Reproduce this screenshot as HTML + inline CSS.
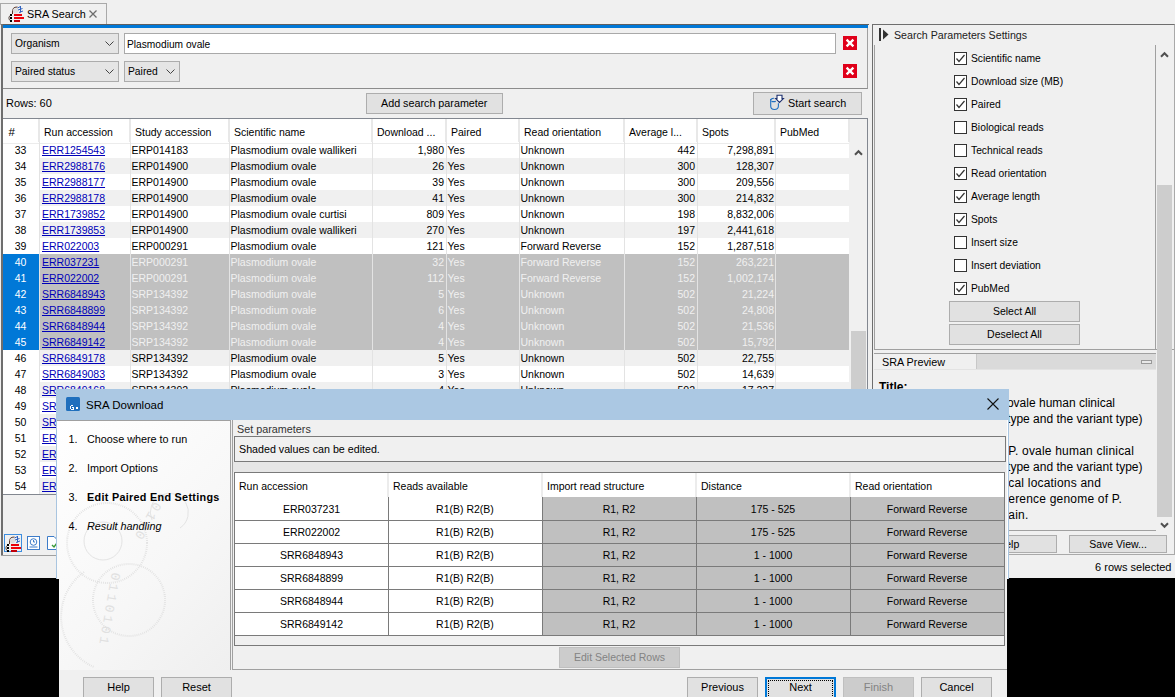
<!DOCTYPE html>
<html><head><meta charset="utf-8"><style>
*{margin:0;padding:0;box-sizing:border-box}
html,body{width:1175px;height:697px;overflow:hidden;background:#f0f0f0;font-family:"Liberation Sans", sans-serif;font-size:10.5px;color:#000;position:relative}
.a{position:absolute}
.t{position:absolute;white-space:pre;line-height:12px}
.btn{position:absolute;background:#e1e1e1;border:1px solid #adadad}
.cb{position:absolute;width:13px;height:13px;border:1px solid #333;background:#fff}
.lnk{color:#0000b8;text-decoration:underline}
</style></head><body>
<div class="a" style="left:0;top:3px;width:107px;height:22px;border:1px solid #a9a9a9;border-bottom:none;background:#f0f0f0"></div>
<svg class="a" style="left:0;top:0" width="26" height="24" viewBox="0 0 26 24"><path d="M12.5 14 Q12 10 13.5 8.2 Q14.5 7 17.5 7" stroke="#5b3b30" stroke-width="1" fill="none"/>
<circle cx="15.5" cy="10.8" r="2.6" fill="#dedede"/>
<path d="M17.5 8 L20.5 6.5 M18 10 L22.5 8.5 M19 12.5 L23 11 M20.5 6 L20.5 12.5" stroke="#2f62c0" stroke-width="1" fill="none"/>
<path d="M11 15 Q8 16.5 9 19 Q9.5 20.5 11 21" stroke="#4a3a34" stroke-width="0.9" fill="none"/>
<g shape-rendering="crispEdges"><rect x="10" y="14" width="2" height="2" fill="#000"/><rect x="10" y="17" width="2" height="2" fill="#000"/><rect x="10" y="20" width="2" height="2" fill="#000"/>
<rect x="14" y="14" width="8" height="2" fill="#e8000a"/><rect x="14" y="17" width="10" height="2" fill="#f0000a"/><rect x="14" y="20" width="6" height="2" fill="#c0000a"/></g></svg>
<div class="t" style="left:27px;top:8px;font-size:10.8px">SRA Search</div>
<svg class="a" style="left:89px;top:10px" width="8" height="8" viewBox="0 0 8 8"><path d="M0.5 0.5L7.5 7.5M7.5 0.5L0.5 7.5" stroke="#6d6d6d" stroke-width="1.3"/></svg>
<div class="a" style="left:1px;top:24px;width:868px;height:1px;background:#5f5f5f"></div>
<div class="a" style="left:2px;top:25px;width:866px;height:3px;background:#0078d7"></div>
<div class="a" style="left:3px;top:28px;width:865px;height:61px;border-right:1px solid #a0a0a0;border-bottom:1px solid #8c8c8c"></div>
<div class="a" style="left:11px;top:33px;width:108px;height:21px;background:#e5e5e5;border:1px solid #acacac"></div>
<div class="t" style="left:15px;top:38px;font-size:10.3px">Organism</div>
<svg class="a" style="left:105px;top:41px" width="9" height="5" viewBox="0 0 9 5"><path d="M0.5 0.5L4.5 4.5L8.5 0.5" stroke="#444" stroke-width="1" fill="none"/></svg>
<div class="a" style="left:11px;top:61px;width:108px;height:21px;background:#e5e5e5;border:1px solid #acacac"></div>
<div class="t" style="left:15px;top:66px;font-size:10.3px">Paired status</div>
<svg class="a" style="left:105px;top:69px" width="9" height="5" viewBox="0 0 9 5"><path d="M0.5 0.5L4.5 4.5L8.5 0.5" stroke="#444" stroke-width="1" fill="none"/></svg>
<div class="a" style="left:124px;top:61px;width:56px;height:21px;background:#e5e5e5;border:1px solid #acacac"></div>
<div class="t" style="left:128px;top:66px;font-size:10.3px">Paired</div>
<svg class="a" style="left:166px;top:69px" width="9" height="5" viewBox="0 0 9 5"><path d="M0.5 0.5L4.5 4.5L8.5 0.5" stroke="#444" stroke-width="1" fill="none"/></svg>
<div class="a" style="left:124px;top:33px;width:712px;height:21px;background:#fff;border:1px solid #a9a9a9"></div>
<div class="t" style="left:127px;top:38.5px;font-size:10.2px">Plasmodium ovale</div>
<div class="a" style="left:843px;top:36px;width:14px;height:14px;background:#e0001a"></div>
<svg class="a" style="left:843px;top:36px" width="14" height="14" viewBox="0 0 14 14"><path d="M3.6 3.6L10.4 10.4M10.4 3.6L3.6 10.4" stroke="#fff" stroke-width="2.3"/></svg>
<div class="a" style="left:843px;top:64px;width:14px;height:14px;background:#e0001a"></div>
<svg class="a" style="left:843px;top:64px" width="14" height="14" viewBox="0 0 14 14"><path d="M3.6 3.6L10.4 10.4M10.4 3.6L3.6 10.4" stroke="#fff" stroke-width="2.3"/></svg>
<div class="t" style="left:6px;top:97px;font-size:11px">Rows: 60</div>
<div class="btn" style="left:366px;top:93px;width:137px;height:21px"></div>
<div class="t" style="left:381px;top:97px;font-size:10.75px">Add search parameter</div>
<div class="btn" style="left:753px;top:92px;width:109px;height:23px"></div>
<svg class="a" style="left:765px;top:92px" width="25" height="22" viewBox="0 0 25 22">
<path d="M5.7 7 L5.7 14 Q5.7 17.5 9.5 17.5 Q13.4 17.5 13.4 14 L13.4 11.2" stroke="#1f6fc0" stroke-width="1.1" fill="none"/>
<path d="M5.7 8.2 Q5.7 6.4 8.9 6.3" stroke="#1f6fc0" stroke-width="1.1" fill="none"/>
<path d="M6.5 9.4 Q8.5 9.9 10.8 9.4" stroke="#1f6fc0" stroke-width="1.1" fill="none"/>
<path d="M12 3.2 L17 3.2 L17 6.6 L18.4 6.6 L14.5 10.4 L10.7 6.6 L12 6.6 Z" stroke="#1c2f6e" stroke-width="1.1" fill="#fff"/>
</svg>
<div class="t" style="left:788px;top:97px;font-size:10.8px">Start search</div>
<div class="a" style="left:2px;top:118px;width:866px;height:377px;border:1px solid #828790;border-left:none;background:#fff;overflow:hidden">
<div class="a" style="left:0;top:0;width:847px;height:24px;background:#fff"></div>
<div class="a" style="left:847px;top:0;width:20px;height:24px;background:#f0f0f0"></div>
<div class="a" style="left:36px;top:0;width:2px;height:24px;background:#e8e8e8"></div>
<div class="t" style="left:6.5px;top:7px;font-size:11.5px">#</div>
<div class="a" style="left:127px;top:0;width:2px;height:24px;background:#e8e8e8"></div>
<div class="t" style="left:42px;top:7px;font-size:10.5px">Run accession</div>
<div class="a" style="left:226px;top:0;width:2px;height:24px;background:#e8e8e8"></div>
<div class="t" style="left:133px;top:7px;font-size:10.5px">Study accession</div>
<div class="a" style="left:369px;top:0;width:2px;height:24px;background:#e8e8e8"></div>
<div class="t" style="left:232px;top:7px;font-size:10.5px">Scientific name</div>
<div class="a" style="left:443px;top:0;width:2px;height:24px;background:#e8e8e8"></div>
<div class="t" style="left:375px;top:7px;font-size:10.5px">Download ...</div>
<div class="a" style="left:516px;top:0;width:2px;height:24px;background:#e8e8e8"></div>
<div class="t" style="left:449px;top:7px;font-size:10.5px">Paired</div>
<div class="a" style="left:621px;top:0;width:2px;height:24px;background:#e8e8e8"></div>
<div class="t" style="left:522px;top:7px;font-size:10.5px">Read orientation</div>
<div class="a" style="left:694px;top:0;width:2px;height:24px;background:#e8e8e8"></div>
<div class="t" style="left:627px;top:7px;font-size:10.5px">Average l...</div>
<div class="a" style="left:772px;top:0;width:2px;height:24px;background:#e8e8e8"></div>
<div class="t" style="left:700px;top:7px;font-size:10.5px">Spots</div>
<div class="a" style="left:846px;top:0;width:2px;height:24px;background:#e8e8e8"></div>
<div class="t" style="left:778px;top:7px;font-size:10.5px">PubMed</div>
<div class="a" style="left:37px;top:23px;width:810px;height:16px;background:#fff"></div>
<div class="a" style="left:0;top:23px;width:37px;height:16px;background:#fff"></div>
<div class="t" style="left:0;top:25px;width:37px;text-align:center;color:#000">33</div>
<div class="t lnk" style="left:40px;top:25px">ERR1254543</div>
<div class="t" style="left:129.5px;top:25px;color:#000">ERP014183</div>
<div class="t" style="left:228.5px;top:25px;color:#000">Plasmodium ovale wallikeri</div>
<div class="t" style="left:370px;top:25px;width:72px;text-align:right;color:#000">1,980</div>
<div class="t" style="left:445.5px;top:25px;color:#000">Yes</div>
<div class="t" style="left:518.5px;top:25px;color:#000">Unknown</div>
<div class="t" style="left:622px;top:25px;width:71px;text-align:right;color:#000">442</div>
<div class="t" style="left:695px;top:25px;width:77px;text-align:right;color:#000">7,298,891</div>
<div class="a" style="left:37px;top:39px;width:810px;height:16px;background:#f0f0f0"></div>
<div class="a" style="left:0;top:39px;width:37px;height:16px;background:#fff"></div>
<div class="t" style="left:0;top:41px;width:37px;text-align:center;color:#000">34</div>
<div class="t lnk" style="left:40px;top:41px">ERR2988176</div>
<div class="t" style="left:129.5px;top:41px;color:#000">ERP014900</div>
<div class="t" style="left:228.5px;top:41px;color:#000">Plasmodium ovale</div>
<div class="t" style="left:370px;top:41px;width:72px;text-align:right;color:#000">26</div>
<div class="t" style="left:445.5px;top:41px;color:#000">Yes</div>
<div class="t" style="left:518.5px;top:41px;color:#000">Unknown</div>
<div class="t" style="left:622px;top:41px;width:71px;text-align:right;color:#000">300</div>
<div class="t" style="left:695px;top:41px;width:77px;text-align:right;color:#000">128,307</div>
<div class="a" style="left:37px;top:55px;width:810px;height:16px;background:#fff"></div>
<div class="a" style="left:0;top:55px;width:37px;height:16px;background:#fff"></div>
<div class="t" style="left:0;top:57px;width:37px;text-align:center;color:#000">35</div>
<div class="t lnk" style="left:40px;top:57px">ERR2988177</div>
<div class="t" style="left:129.5px;top:57px;color:#000">ERP014900</div>
<div class="t" style="left:228.5px;top:57px;color:#000">Plasmodium ovale</div>
<div class="t" style="left:370px;top:57px;width:72px;text-align:right;color:#000">39</div>
<div class="t" style="left:445.5px;top:57px;color:#000">Yes</div>
<div class="t" style="left:518.5px;top:57px;color:#000">Unknown</div>
<div class="t" style="left:622px;top:57px;width:71px;text-align:right;color:#000">300</div>
<div class="t" style="left:695px;top:57px;width:77px;text-align:right;color:#000">209,556</div>
<div class="a" style="left:37px;top:71px;width:810px;height:16px;background:#f0f0f0"></div>
<div class="a" style="left:0;top:71px;width:37px;height:16px;background:#fff"></div>
<div class="t" style="left:0;top:73px;width:37px;text-align:center;color:#000">36</div>
<div class="t lnk" style="left:40px;top:73px">ERR2988178</div>
<div class="t" style="left:129.5px;top:73px;color:#000">ERP014900</div>
<div class="t" style="left:228.5px;top:73px;color:#000">Plasmodium ovale</div>
<div class="t" style="left:370px;top:73px;width:72px;text-align:right;color:#000">41</div>
<div class="t" style="left:445.5px;top:73px;color:#000">Yes</div>
<div class="t" style="left:518.5px;top:73px;color:#000">Unknown</div>
<div class="t" style="left:622px;top:73px;width:71px;text-align:right;color:#000">300</div>
<div class="t" style="left:695px;top:73px;width:77px;text-align:right;color:#000">214,832</div>
<div class="a" style="left:37px;top:87px;width:810px;height:16px;background:#fff"></div>
<div class="a" style="left:0;top:87px;width:37px;height:16px;background:#fff"></div>
<div class="t" style="left:0;top:89px;width:37px;text-align:center;color:#000">37</div>
<div class="t lnk" style="left:40px;top:89px">ERR1739852</div>
<div class="t" style="left:129.5px;top:89px;color:#000">ERP014900</div>
<div class="t" style="left:228.5px;top:89px;color:#000">Plasmodium ovale curtisi</div>
<div class="t" style="left:370px;top:89px;width:72px;text-align:right;color:#000">809</div>
<div class="t" style="left:445.5px;top:89px;color:#000">Yes</div>
<div class="t" style="left:518.5px;top:89px;color:#000">Unknown</div>
<div class="t" style="left:622px;top:89px;width:71px;text-align:right;color:#000">198</div>
<div class="t" style="left:695px;top:89px;width:77px;text-align:right;color:#000">8,832,006</div>
<div class="a" style="left:37px;top:103px;width:810px;height:16px;background:#f0f0f0"></div>
<div class="a" style="left:0;top:103px;width:37px;height:16px;background:#fff"></div>
<div class="t" style="left:0;top:105px;width:37px;text-align:center;color:#000">38</div>
<div class="t lnk" style="left:40px;top:105px">ERR1739853</div>
<div class="t" style="left:129.5px;top:105px;color:#000">ERP014900</div>
<div class="t" style="left:228.5px;top:105px;color:#000">Plasmodium ovale wallikeri</div>
<div class="t" style="left:370px;top:105px;width:72px;text-align:right;color:#000">270</div>
<div class="t" style="left:445.5px;top:105px;color:#000">Yes</div>
<div class="t" style="left:518.5px;top:105px;color:#000">Unknown</div>
<div class="t" style="left:622px;top:105px;width:71px;text-align:right;color:#000">197</div>
<div class="t" style="left:695px;top:105px;width:77px;text-align:right;color:#000">2,441,618</div>
<div class="a" style="left:37px;top:119px;width:810px;height:16px;background:#fff"></div>
<div class="a" style="left:0;top:119px;width:37px;height:16px;background:#fff"></div>
<div class="t" style="left:0;top:121px;width:37px;text-align:center;color:#000">39</div>
<div class="t lnk" style="left:40px;top:121px">ERR022003</div>
<div class="t" style="left:129.5px;top:121px;color:#000">ERP000291</div>
<div class="t" style="left:228.5px;top:121px;color:#000">Plasmodium ovale</div>
<div class="t" style="left:370px;top:121px;width:72px;text-align:right;color:#000">121</div>
<div class="t" style="left:445.5px;top:121px;color:#000">Yes</div>
<div class="t" style="left:518.5px;top:121px;color:#000">Forward Reverse</div>
<div class="t" style="left:622px;top:121px;width:71px;text-align:right;color:#000">152</div>
<div class="t" style="left:695px;top:121px;width:77px;text-align:right;color:#000">1,287,518</div>
<div class="a" style="left:37px;top:135px;width:810px;height:16px;background:#c0c0c0"></div>
<div class="a" style="left:0;top:135px;width:37px;height:16px;background:#0078d7"></div>
<div class="t" style="left:0;top:137px;width:37px;text-align:center;color:#fff">40</div>
<div class="t lnk" style="left:40px;top:137px">ERR037231</div>
<div class="t" style="left:129.5px;top:137px;color:#f0f0f0">ERP000291</div>
<div class="t" style="left:228.5px;top:137px;color:#f0f0f0">Plasmodium ovale</div>
<div class="t" style="left:370px;top:137px;width:72px;text-align:right;color:#f0f0f0">32</div>
<div class="t" style="left:445.5px;top:137px;color:#f0f0f0">Yes</div>
<div class="t" style="left:518.5px;top:137px;color:#f0f0f0">Forward Reverse</div>
<div class="t" style="left:622px;top:137px;width:71px;text-align:right;color:#f0f0f0">152</div>
<div class="t" style="left:695px;top:137px;width:77px;text-align:right;color:#f0f0f0">263,221</div>
<div class="a" style="left:37px;top:151px;width:810px;height:16px;background:#c0c0c0"></div>
<div class="a" style="left:0;top:151px;width:37px;height:16px;background:#0078d7"></div>
<div class="t" style="left:0;top:153px;width:37px;text-align:center;color:#fff">41</div>
<div class="t lnk" style="left:40px;top:153px">ERR022002</div>
<div class="t" style="left:129.5px;top:153px;color:#f0f0f0">ERP000291</div>
<div class="t" style="left:228.5px;top:153px;color:#f0f0f0">Plasmodium ovale</div>
<div class="t" style="left:370px;top:153px;width:72px;text-align:right;color:#f0f0f0">112</div>
<div class="t" style="left:445.5px;top:153px;color:#f0f0f0">Yes</div>
<div class="t" style="left:518.5px;top:153px;color:#f0f0f0">Forward Reverse</div>
<div class="t" style="left:622px;top:153px;width:71px;text-align:right;color:#f0f0f0">152</div>
<div class="t" style="left:695px;top:153px;width:77px;text-align:right;color:#f0f0f0">1,002,174</div>
<div class="a" style="left:37px;top:167px;width:810px;height:16px;background:#c0c0c0"></div>
<div class="a" style="left:0;top:167px;width:37px;height:16px;background:#0078d7"></div>
<div class="t" style="left:0;top:169px;width:37px;text-align:center;color:#fff">42</div>
<div class="t lnk" style="left:40px;top:169px">SRR6848943</div>
<div class="t" style="left:129.5px;top:169px;color:#f0f0f0">SRP134392</div>
<div class="t" style="left:228.5px;top:169px;color:#f0f0f0">Plasmodium ovale</div>
<div class="t" style="left:370px;top:169px;width:72px;text-align:right;color:#f0f0f0">5</div>
<div class="t" style="left:445.5px;top:169px;color:#f0f0f0">Yes</div>
<div class="t" style="left:518.5px;top:169px;color:#f0f0f0">Unknown</div>
<div class="t" style="left:622px;top:169px;width:71px;text-align:right;color:#f0f0f0">502</div>
<div class="t" style="left:695px;top:169px;width:77px;text-align:right;color:#f0f0f0">21,224</div>
<div class="a" style="left:37px;top:183px;width:810px;height:16px;background:#c0c0c0"></div>
<div class="a" style="left:0;top:183px;width:37px;height:16px;background:#0078d7"></div>
<div class="t" style="left:0;top:185px;width:37px;text-align:center;color:#fff">43</div>
<div class="t lnk" style="left:40px;top:185px">SRR6848899</div>
<div class="t" style="left:129.5px;top:185px;color:#f0f0f0">SRP134392</div>
<div class="t" style="left:228.5px;top:185px;color:#f0f0f0">Plasmodium ovale</div>
<div class="t" style="left:370px;top:185px;width:72px;text-align:right;color:#f0f0f0">6</div>
<div class="t" style="left:445.5px;top:185px;color:#f0f0f0">Yes</div>
<div class="t" style="left:518.5px;top:185px;color:#f0f0f0">Unknown</div>
<div class="t" style="left:622px;top:185px;width:71px;text-align:right;color:#f0f0f0">502</div>
<div class="t" style="left:695px;top:185px;width:77px;text-align:right;color:#f0f0f0">24,808</div>
<div class="a" style="left:37px;top:199px;width:810px;height:16px;background:#c0c0c0"></div>
<div class="a" style="left:0;top:199px;width:37px;height:16px;background:#0078d7"></div>
<div class="t" style="left:0;top:201px;width:37px;text-align:center;color:#fff">44</div>
<div class="t lnk" style="left:40px;top:201px">SRR6848944</div>
<div class="t" style="left:129.5px;top:201px;color:#f0f0f0">SRP134392</div>
<div class="t" style="left:228.5px;top:201px;color:#f0f0f0">Plasmodium ovale</div>
<div class="t" style="left:370px;top:201px;width:72px;text-align:right;color:#f0f0f0">4</div>
<div class="t" style="left:445.5px;top:201px;color:#f0f0f0">Yes</div>
<div class="t" style="left:518.5px;top:201px;color:#f0f0f0">Unknown</div>
<div class="t" style="left:622px;top:201px;width:71px;text-align:right;color:#f0f0f0">502</div>
<div class="t" style="left:695px;top:201px;width:77px;text-align:right;color:#f0f0f0">21,536</div>
<div class="a" style="left:37px;top:215px;width:810px;height:16px;background:#c0c0c0"></div>
<div class="a" style="left:0;top:215px;width:37px;height:16px;background:#0078d7"></div>
<div class="t" style="left:0;top:217px;width:37px;text-align:center;color:#fff">45</div>
<div class="t lnk" style="left:40px;top:217px">SRR6849142</div>
<div class="t" style="left:129.5px;top:217px;color:#f0f0f0">SRP134392</div>
<div class="t" style="left:228.5px;top:217px;color:#f0f0f0">Plasmodium ovale</div>
<div class="t" style="left:370px;top:217px;width:72px;text-align:right;color:#f0f0f0">4</div>
<div class="t" style="left:445.5px;top:217px;color:#f0f0f0">Yes</div>
<div class="t" style="left:518.5px;top:217px;color:#f0f0f0">Unknown</div>
<div class="t" style="left:622px;top:217px;width:71px;text-align:right;color:#f0f0f0">502</div>
<div class="t" style="left:695px;top:217px;width:77px;text-align:right;color:#f0f0f0">15,792</div>
<div class="a" style="left:37px;top:231px;width:810px;height:16px;background:#f0f0f0"></div>
<div class="a" style="left:0;top:231px;width:37px;height:16px;background:#fff"></div>
<div class="t" style="left:0;top:233px;width:37px;text-align:center;color:#000">46</div>
<div class="t lnk" style="left:40px;top:233px">SRR6849178</div>
<div class="t" style="left:129.5px;top:233px;color:#000">SRP134392</div>
<div class="t" style="left:228.5px;top:233px;color:#000">Plasmodium ovale</div>
<div class="t" style="left:370px;top:233px;width:72px;text-align:right;color:#000">5</div>
<div class="t" style="left:445.5px;top:233px;color:#000">Yes</div>
<div class="t" style="left:518.5px;top:233px;color:#000">Unknown</div>
<div class="t" style="left:622px;top:233px;width:71px;text-align:right;color:#000">502</div>
<div class="t" style="left:695px;top:233px;width:77px;text-align:right;color:#000">22,755</div>
<div class="a" style="left:37px;top:247px;width:810px;height:16px;background:#fff"></div>
<div class="a" style="left:0;top:247px;width:37px;height:16px;background:#fff"></div>
<div class="t" style="left:0;top:249px;width:37px;text-align:center;color:#000">47</div>
<div class="t lnk" style="left:40px;top:249px">SRR6849083</div>
<div class="t" style="left:129.5px;top:249px;color:#000">SRP134392</div>
<div class="t" style="left:228.5px;top:249px;color:#000">Plasmodium ovale</div>
<div class="t" style="left:370px;top:249px;width:72px;text-align:right;color:#000">3</div>
<div class="t" style="left:445.5px;top:249px;color:#000">Yes</div>
<div class="t" style="left:518.5px;top:249px;color:#000">Unknown</div>
<div class="t" style="left:622px;top:249px;width:71px;text-align:right;color:#000">502</div>
<div class="t" style="left:695px;top:249px;width:77px;text-align:right;color:#000">14,639</div>
<div class="a" style="left:37px;top:263px;width:810px;height:16px;background:#f0f0f0"></div>
<div class="a" style="left:0;top:263px;width:37px;height:16px;background:#fff"></div>
<div class="t" style="left:0;top:265px;width:37px;text-align:center;color:#000">48</div>
<div class="t lnk" style="left:40px;top:265px">SRR6849168</div>
<div class="t" style="left:129.5px;top:265px;color:#000">SRP134392</div>
<div class="t" style="left:228.5px;top:265px;color:#000">Plasmodium ovale</div>
<div class="t" style="left:370px;top:265px;width:72px;text-align:right;color:#000">4</div>
<div class="t" style="left:445.5px;top:265px;color:#000">Yes</div>
<div class="t" style="left:518.5px;top:265px;color:#000">Unknown</div>
<div class="t" style="left:622px;top:265px;width:71px;text-align:right;color:#000">502</div>
<div class="t" style="left:695px;top:265px;width:77px;text-align:right;color:#000">17,227</div>
<div class="a" style="left:37px;top:279px;width:810px;height:16px;background:#fff"></div>
<div class="a" style="left:0;top:279px;width:37px;height:16px;background:#fff"></div>
<div class="t" style="left:0;top:281px;width:37px;text-align:center;color:#000">49</div>
<div class="t lnk" style="left:40px;top:281px">SRR6849163</div>
<div class="t" style="left:129.5px;top:281px;color:#000">SRP134392</div>
<div class="t" style="left:228.5px;top:281px;color:#000">Plasmodium ovale</div>
<div class="t" style="left:370px;top:281px;width:72px;text-align:right;color:#000">4</div>
<div class="t" style="left:445.5px;top:281px;color:#000">Yes</div>
<div class="t" style="left:518.5px;top:281px;color:#000">Unknown</div>
<div class="t" style="left:622px;top:281px;width:71px;text-align:right;color:#000">502</div>
<div class="t" style="left:695px;top:281px;width:77px;text-align:right;color:#000">16,310</div>
<div class="a" style="left:37px;top:295px;width:810px;height:16px;background:#f0f0f0"></div>
<div class="a" style="left:0;top:295px;width:37px;height:16px;background:#fff"></div>
<div class="t" style="left:0;top:297px;width:37px;text-align:center;color:#000">50</div>
<div class="t lnk" style="left:40px;top:297px">SRR6849067</div>
<div class="t" style="left:129.5px;top:297px;color:#000">SRP134392</div>
<div class="t" style="left:228.5px;top:297px;color:#000">Plasmodium ovale</div>
<div class="t" style="left:370px;top:297px;width:72px;text-align:right;color:#000">5</div>
<div class="t" style="left:445.5px;top:297px;color:#000">Yes</div>
<div class="t" style="left:518.5px;top:297px;color:#000">Unknown</div>
<div class="t" style="left:622px;top:297px;width:71px;text-align:right;color:#000">502</div>
<div class="t" style="left:695px;top:297px;width:77px;text-align:right;color:#000">20,118</div>
<div class="a" style="left:37px;top:311px;width:810px;height:16px;background:#fff"></div>
<div class="a" style="left:0;top:311px;width:37px;height:16px;background:#fff"></div>
<div class="t" style="left:0;top:313px;width:37px;text-align:center;color:#000">51</div>
<div class="t lnk" style="left:40px;top:313px">ERR1254544</div>
<div class="t" style="left:129.5px;top:313px;color:#000">ERP014183</div>
<div class="t" style="left:228.5px;top:313px;color:#000">Plasmodium ovale</div>
<div class="t" style="left:370px;top:313px;width:72px;text-align:right;color:#000">6</div>
<div class="t" style="left:445.5px;top:313px;color:#000">Yes</div>
<div class="t" style="left:518.5px;top:313px;color:#000">Unknown</div>
<div class="t" style="left:622px;top:313px;width:71px;text-align:right;color:#000">300</div>
<div class="t" style="left:695px;top:313px;width:77px;text-align:right;color:#000">26,001</div>
<div class="a" style="left:37px;top:327px;width:810px;height:16px;background:#f0f0f0"></div>
<div class="a" style="left:0;top:327px;width:37px;height:16px;background:#fff"></div>
<div class="t" style="left:0;top:329px;width:37px;text-align:center;color:#000">52</div>
<div class="t lnk" style="left:40px;top:329px">ERR1254545</div>
<div class="t" style="left:129.5px;top:329px;color:#000">ERP014183</div>
<div class="t" style="left:228.5px;top:329px;color:#000">Plasmodium ovale</div>
<div class="t" style="left:370px;top:329px;width:72px;text-align:right;color:#000">5</div>
<div class="t" style="left:445.5px;top:329px;color:#000">Yes</div>
<div class="t" style="left:518.5px;top:329px;color:#000">Unknown</div>
<div class="t" style="left:622px;top:329px;width:71px;text-align:right;color:#000">300</div>
<div class="t" style="left:695px;top:329px;width:77px;text-align:right;color:#000">23,412</div>
<div class="a" style="left:37px;top:343px;width:810px;height:16px;background:#fff"></div>
<div class="a" style="left:0;top:343px;width:37px;height:16px;background:#fff"></div>
<div class="t" style="left:0;top:345px;width:37px;text-align:center;color:#000">53</div>
<div class="t lnk" style="left:40px;top:345px">ERR1254546</div>
<div class="t" style="left:129.5px;top:345px;color:#000">ERP014183</div>
<div class="t" style="left:228.5px;top:345px;color:#000">Plasmodium ovale</div>
<div class="t" style="left:370px;top:345px;width:72px;text-align:right;color:#000">4</div>
<div class="t" style="left:445.5px;top:345px;color:#000">Yes</div>
<div class="t" style="left:518.5px;top:345px;color:#000">Unknown</div>
<div class="t" style="left:622px;top:345px;width:71px;text-align:right;color:#000">300</div>
<div class="t" style="left:695px;top:345px;width:77px;text-align:right;color:#000">19,877</div>
<div class="a" style="left:37px;top:359px;width:810px;height:16px;background:#f0f0f0"></div>
<div class="a" style="left:0;top:359px;width:37px;height:16px;background:#fff"></div>
<div class="t" style="left:0;top:361px;width:37px;text-align:center;color:#000">54</div>
<div class="t lnk" style="left:40px;top:361px">ERR1254547</div>
<div class="t" style="left:129.5px;top:361px;color:#000">ERP014183</div>
<div class="t" style="left:228.5px;top:361px;color:#000">Plasmodium ovale</div>
<div class="t" style="left:370px;top:361px;width:72px;text-align:right;color:#000">7</div>
<div class="t" style="left:445.5px;top:361px;color:#000">Yes</div>
<div class="t" style="left:518.5px;top:361px;color:#000">Unknown</div>
<div class="t" style="left:622px;top:361px;width:71px;text-align:right;color:#000">300</div>
<div class="t" style="left:695px;top:361px;width:77px;text-align:right;color:#000">30,544</div>
<div class="a" style="left:0;top:24px;width:847px;height:1px;background:#ececec"></div>
<div class="a" style="left:37px;top:23px;width:1px;height:360px;background:#e3e3e3"></div>
<div class="a" style="left:128px;top:23px;width:1px;height:360px;background:#e3e3e3"></div>
<div class="a" style="left:227px;top:23px;width:1px;height:360px;background:#e3e3e3"></div>
<div class="a" style="left:370px;top:23px;width:1px;height:360px;background:#e3e3e3"></div>
<div class="a" style="left:444px;top:23px;width:1px;height:360px;background:#e3e3e3"></div>
<div class="a" style="left:517px;top:23px;width:1px;height:360px;background:#e3e3e3"></div>
<div class="a" style="left:622px;top:23px;width:1px;height:360px;background:#e3e3e3"></div>
<div class="a" style="left:695px;top:23px;width:1px;height:360px;background:#e3e3e3"></div>
<div class="a" style="left:773px;top:23px;width:1px;height:360px;background:#e3e3e3"></div>
<div class="a" style="left:847px;top:23px;width:1px;height:360px;background:#e3e3e3"></div>
<div class="a" style="left:847px;top:23px;width:18px;height:360px;background:#f0f0f0"></div>
<svg class="a" style="left:852px;top:30px" width="9" height="7" viewBox="0 0 9 7"><path d="M1 5.8L4.5 2.2L8 5.8" stroke="#505050" stroke-width="2" fill="none"/></svg>
<div class="a" style="left:849px;top:212px;width:15px;height:60px;background:#cdcdcd"></div>
</div>
<div class="a" style="left:1px;top:24px;width:2px;height:531px;background:#6e6e6e"></div>
<div class="a" style="left:4px;top:534px;width:18px;height:18px;border:1px solid #3d8ee0;background:#f0f0f0"></div>
<svg class="a" style="left:-3px;top:530px" width="26" height="24" viewBox="0 0 26 24"><path d="M12.5 14 Q12 10 13.5 8.2 Q14.5 7 17.5 7" stroke="#5b3b30" stroke-width="1" fill="none"/>
<circle cx="15.5" cy="10.8" r="2.6" fill="#dedede"/>
<path d="M17.5 8 L20.5 6.5 M18 10 L22.5 8.5 M19 12.5 L23 11 M20.5 6 L20.5 12.5" stroke="#2f62c0" stroke-width="1" fill="none"/>
<path d="M11 15 Q8 16.5 9 19 Q9.5 20.5 11 21" stroke="#4a3a34" stroke-width="0.9" fill="none"/>
<g shape-rendering="crispEdges"><rect x="10" y="14" width="2" height="2" fill="#000"/><rect x="10" y="17" width="2" height="2" fill="#000"/><rect x="10" y="20" width="2" height="2" fill="#000"/>
<rect x="14" y="14" width="8" height="2" fill="#e8000a"/><rect x="14" y="17" width="10" height="2" fill="#f0000a"/><rect x="14" y="20" width="6" height="2" fill="#c0000a"/></g></svg>
<svg class="a" style="left:27px;top:536px" width="13" height="14" viewBox="0 0 13 14">
<rect x="0.5" y="0.5" width="12" height="13" fill="#fff" stroke="#3d7cc9"/>
<circle cx="6.5" cy="6" r="3.3" fill="none" stroke="#3d7cc9"/><path d="M6.5 4 L6.5 6 L8 6" stroke="#3d7cc9" fill="none"/>
<path d="M2.5 11 L10.5 11" stroke="#3d7cc9"/>
</svg>
<svg class="a" style="left:47px;top:536px" width="12" height="14" viewBox="0 0 12 14">
<path d="M0.5 0.5 L7 0.5 L10 3.5 L10 13.5 L0.5 13.5 Z" fill="#fff" stroke="#3d7cc9"/>
<path d="M5 9 L7 11 L10 7" stroke="#3a9a3a" stroke-width="1.4" fill="none"/>
</svg>
<div class="a" style="left:1px;top:555px;width:868px;height:1px;background:#a0a0a0"></div>
<div class="a" style="left:872px;top:24px;width:303px;height:531px;border:1px solid #a9a9a9;border-left:1px solid #6e6e6e;border-top:1px solid #6e6e6e"></div>
<div class="a" style="left:879px;top:28px;width:2px;height:13px;background:#333"></div>
<svg class="a" style="left:883px;top:29px" width="6" height="11" viewBox="0 0 6 11"><path d="M0 0.5L5.5 5.5L0 10.5Z" fill="#333"/></svg>
<div class="t" style="left:894px;top:29px;font-size:10.65px;color:#222">Search Parameters Settings</div>
<div class="a" style="left:874px;top:45px;width:1px;height:304px;background:#a0a0a0"></div>
<div class="a" style="left:1155px;top:45px;width:1px;height:304px;background:#a0a0a0"></div>
<div class="a" style="left:874px;top:349px;width:300px;height:1px;background:#a0a0a0"></div>
<svg class="a" style="left:1160px;top:51px" width="9" height="7" viewBox="0 0 9 7"><path d="M1 5.8L4.5 2.2L8 5.8" stroke="#505050" stroke-width="2" fill="none"/></svg>
<div class="a" style="left:1157px;top:185px;width:15px;height:332px;background:#cdcdcd"></div>
<svg class="a" style="left:1160px;top:522px" width="9" height="7" viewBox="0 0 9 7"><path d="M1 1.2L4.5 4.8L8 1.2" stroke="#505050" stroke-width="2" fill="none"/></svg>
<div class="cb" style="left:954px;top:52px"></div>
<svg class="a" style="left:954px;top:52px" width="13" height="13" viewBox="0 0 13 13"><path d="M2.5 6.5L5 9.5L10.5 3" stroke="#333" stroke-width="1.2" fill="none"/></svg>
<div class="t" style="left:971px;top:53px;font-size:10.3px">Scientific name</div>
<div class="cb" style="left:954px;top:75px"></div>
<svg class="a" style="left:954px;top:75px" width="13" height="13" viewBox="0 0 13 13"><path d="M2.5 6.5L5 9.5L10.5 3" stroke="#333" stroke-width="1.2" fill="none"/></svg>
<div class="t" style="left:971px;top:76px;font-size:10.3px">Download size (MB)</div>
<div class="cb" style="left:954px;top:98px"></div>
<svg class="a" style="left:954px;top:98px" width="13" height="13" viewBox="0 0 13 13"><path d="M2.5 6.5L5 9.5L10.5 3" stroke="#333" stroke-width="1.2" fill="none"/></svg>
<div class="t" style="left:971px;top:99px;font-size:10.3px">Paired</div>
<div class="cb" style="left:954px;top:121px"></div>
<div class="t" style="left:971px;top:122px;font-size:10.3px">Biological reads</div>
<div class="cb" style="left:954px;top:144px"></div>
<div class="t" style="left:971px;top:145px;font-size:10.3px">Technical reads</div>
<div class="cb" style="left:954px;top:167px"></div>
<svg class="a" style="left:954px;top:167px" width="13" height="13" viewBox="0 0 13 13"><path d="M2.5 6.5L5 9.5L10.5 3" stroke="#333" stroke-width="1.2" fill="none"/></svg>
<div class="t" style="left:971px;top:168px;font-size:10.3px">Read orientation</div>
<div class="cb" style="left:954px;top:190px"></div>
<svg class="a" style="left:954px;top:190px" width="13" height="13" viewBox="0 0 13 13"><path d="M2.5 6.5L5 9.5L10.5 3" stroke="#333" stroke-width="1.2" fill="none"/></svg>
<div class="t" style="left:971px;top:191px;font-size:10.3px">Average length</div>
<div class="cb" style="left:954px;top:213px"></div>
<svg class="a" style="left:954px;top:213px" width="13" height="13" viewBox="0 0 13 13"><path d="M2.5 6.5L5 9.5L10.5 3" stroke="#333" stroke-width="1.2" fill="none"/></svg>
<div class="t" style="left:971px;top:214px;font-size:10.3px">Spots</div>
<div class="cb" style="left:954px;top:236px"></div>
<div class="t" style="left:971px;top:237px;font-size:10.3px">Insert size</div>
<div class="cb" style="left:954px;top:259px"></div>
<div class="t" style="left:971px;top:260px;font-size:10.3px">Insert deviation</div>
<div class="cb" style="left:954px;top:282px"></div>
<svg class="a" style="left:954px;top:282px" width="13" height="13" viewBox="0 0 13 13"><path d="M2.5 6.5L5 9.5L10.5 3" stroke="#333" stroke-width="1.2" fill="none"/></svg>
<div class="t" style="left:971px;top:283px;font-size:10.3px">PubMed</div>
<div class="btn" style="left:949px;top:301px;width:131px;height:21px"></div>
<div class="t" style="left:949px;top:305px;width:131px;text-align:center">Select All</div>
<div class="btn" style="left:949px;top:324px;width:131px;height:21px"></div>
<div class="t" style="left:949px;top:328px;width:131px;text-align:center">Deselect All</div>
<div class="a" style="left:874px;top:353px;width:282px;height:1px;background:#a0a0a0"></div>
<div class="a" style="left:976px;top:354px;width:180px;height:15px;background:#dadada"></div>
<div class="a" style="left:874px;top:369px;width:282px;height:1px;background:#e3e3e3"></div>
<div class="a" style="left:976px;top:354px;width:1px;height:15px;background:#c8c8c8"></div>
<div class="t" style="left:882px;top:356px;font-size:10.8px">SRA Preview</div>
<div class="a" style="left:1141px;top:360px;width:11px;height:4px;border:1px solid #999;background:#e8e8e8"></div>
<div class="t" style="left:879px;top:381px;font-size:12px;font-weight:bold">Title:</div>
<div class="a" style="left:876px;top:372px;width:279px;height:158px;overflow:hidden">
<div class="t" style="right:40px;top:23px;font-size:12px;line-height:16px">ovale human clinical</div>
<div class="t" style="right:12.5px;top:39px;font-size:12px;line-height:16px">type and the variant type)</div>
<div class="t" style="left:132.29999999999995px;top:71px;font-size:12px;line-height:16px;letter-spacing:0.2px">P. ovale human clinical</div>
<div class="t" style="right:12.5px;top:87px;font-size:12px;line-height:16px">type and the variant type)</div>
<div class="t" style="left:132.29999999999995px;top:103px;font-size:12px;line-height:16px;letter-spacing:0.2px">cal locations and</div>
<div class="t" style="left:132.29999999999995px;top:119px;font-size:12px;line-height:16px;letter-spacing:0.2px">erence genome of P.</div>
<div class="t" style="left:132.29999999999995px;top:135px;font-size:12px;line-height:16px;letter-spacing:0.2px">ain.</div>
</div>
<div class="a" style="left:874px;top:530px;width:282px;height:1px;background:#a0a0a0"></div>
<div class="btn" style="left:960px;top:535px;width:97px;height:18px"></div>
<div class="t" style="left:960px;top:538px;width:97px;text-align:center">Help</div>
<div class="btn" style="left:1069px;top:535px;width:98px;height:18px"></div>
<div class="t" style="left:1069px;top:538px;width:98px;text-align:center">Save View...</div>
<div class="t" style="left:1000px;top:561px;width:171.5px;text-align:right;font-size:11px">6 rows selected</div>
<div class="a" style="left:0;top:578px;width:1175px;height:119px;background:#000"></div>
<div class="a" style="left:56px;top:389px;width:953px;height:308px;background:#f0f0f0;border:1px solid #a9c5e0;border-bottom:none"></div>
<div class="a" style="left:1007px;top:420px;width:1px;height:277px;background:#ffffff"></div>
<div class="a" style="left:56px;top:389px;width:953px;height:31px;background:#abc8e3"></div>
<div class="a" style="left:66px;top:397px;width:14px;height:14px;background:#1f6fbd;border-radius:1.5px"></div>
<svg class="a" style="left:66px;top:397px" width="14" height="14" viewBox="0 0 14 14" shape-rendering="crispEdges"><g fill="#fff"><rect x="5" y="8" width="2" height="1"/><rect x="4" y="9" width="1" height="3"/><rect x="5" y="12" width="3" height="1"/><rect x="7" y="10" width="1" height="2"/><rect x="6" y="10" width="1" height="1"/><rect x="10" y="10" width="2" height="2"/></g></svg>
<div class="t" style="left:86px;top:398px;font-size:11.5px;line-height:14px">SRA Download</div>
<svg class="a" style="left:987px;top:398px" width="12" height="12" viewBox="0 0 12 12"><path d="M0.5 0.5L11.5 11.5M11.5 0.5L0.5 11.5" stroke="#111" stroke-width="1.1"/></svg>
<div class="a" style="left:57px;top:420px;width:174px;height:250px;border-top:1px solid #a0a0a0;border-right:1px solid #a0a0a0;background:linear-gradient(135deg,#ffffff 0%,#f7f7f7 60%,#efefef 100%)"></div>
<svg class="a" style="left:58px;top:421px" width="172" height="248" viewBox="58 421 172 248">
<g fill="none" stroke="#e0e0e0" stroke-width="2" stroke-dasharray="0.8 1.2">
<circle cx="107" cy="543" r="40"/><circle cx="129" cy="600" r="36"/><path d="M84 572 A55 55 0 0 0 94 667"/></g>
<g fill="none" stroke="#e4e4e4" stroke-width="1"><circle cx="103" cy="541" r="19"/><path d="M152 520 A19 19 0 1 1 180 528"/></g>
<g fill="#e0e0e0" font-family="Liberation Mono" font-size="13" letter-spacing="3"><text transform="translate(160 492) rotate(120)">00100</text><text transform="translate(112 572) rotate(100)">0110101</text></g>
</svg>
<div class="t" style="left:68.5px;top:433px;font-size:10.8px">1.</div>
<div class="t" style="left:87px;top:433px;font-size:10.8px;font-weight:normal;font-style:normal;letter-spacing:0">Choose where to run</div>
<div class="t" style="left:68.5px;top:462px;font-size:10.8px">2.</div>
<div class="t" style="left:87px;top:462px;font-size:10.8px;font-weight:normal;font-style:normal;letter-spacing:0">Import Options</div>
<div class="t" style="left:68.5px;top:491px;font-size:10.8px">3.</div>
<div class="t" style="left:87px;top:491px;font-size:10.8px;font-weight:bold;font-style:normal;letter-spacing:0.3px">Edit Paired End Settings</div>
<div class="t" style="left:68.5px;top:520px;font-size:10.8px">4.</div>
<div class="t" style="left:87px;top:520px;font-size:10.8px;font-weight:normal;font-style:italic;letter-spacing:0">Result handling</div>
<div class="a" style="left:232px;top:420px;width:775px;height:250px;border-left:1px solid #a0a0a0;border-bottom:1px solid #a0a0a0"></div>
<div class="t" style="left:237px;top:423px;font-size:10.8px;color:#333">Set parameters</div>
<div class="a" style="left:234px;top:436px;width:772px;height:26px;border:1px solid #7a7a7a"></div>
<div class="t" style="left:239px;top:443px;font-size:10.7px">Shaded values can be edited.</div>
<div class="a" style="left:233px;top:462px;width:773px;height:10px;background:#e6e6e6"></div>
<div class="a" style="left:234px;top:472px;width:771px;height:174px;border:1px solid #7a7a7a;background:#f0f0f0"></div>
<div class="a" style="left:235px;top:473px;width:769px;height:24px;background:#fff"></div>
<div class="t" style="left:239px;top:480px;font-size:10.5px">Run accession</div>
<div class="a" style="left:387px;top:473px;width:2px;height:24px;background:#ececec"></div>
<div class="t" style="left:393px;top:480px;font-size:10.5px">Reads available</div>
<div class="a" style="left:541px;top:473px;width:2px;height:24px;background:#ececec"></div>
<div class="t" style="left:547px;top:480px;font-size:10.5px">Import read structure</div>
<div class="a" style="left:695px;top:473px;width:2px;height:24px;background:#ececec"></div>
<div class="t" style="left:701px;top:480px;font-size:10.5px">Distance</div>
<div class="a" style="left:849px;top:473px;width:2px;height:24px;background:#ececec"></div>
<div class="t" style="left:855px;top:480px;font-size:10.5px">Read orientation</div>
<div class="a" style="left:235px;top:497px;width:307px;height:23px;background:#fff"></div>
<div class="a" style="left:542px;top:497px;width:462px;height:23px;background:#c0c0c0"></div>
<div class="t" style="left:235px;top:503px;width:153px;text-align:center;font-size:10.5px">ERR037231</div>
<div class="t" style="left:388px;top:503px;width:154px;text-align:center;font-size:10.5px">R1(B) R2(B)</div>
<div class="t" style="left:542px;top:503px;width:154px;text-align:center;font-size:10.5px">R1, R2</div>
<div class="t" style="left:696px;top:503px;width:154px;text-align:center;font-size:10.5px">175 - 525</div>
<div class="t" style="left:850px;top:503px;width:154px;text-align:center;font-size:10.5px">Forward Reverse</div>
<div class="a" style="left:235px;top:520px;width:307px;height:23px;background:#fff"></div>
<div class="a" style="left:542px;top:520px;width:462px;height:23px;background:#c0c0c0"></div>
<div class="t" style="left:235px;top:526px;width:153px;text-align:center;font-size:10.5px">ERR022002</div>
<div class="t" style="left:388px;top:526px;width:154px;text-align:center;font-size:10.5px">R1(B) R2(B)</div>
<div class="t" style="left:542px;top:526px;width:154px;text-align:center;font-size:10.5px">R1, R2</div>
<div class="t" style="left:696px;top:526px;width:154px;text-align:center;font-size:10.5px">175 - 525</div>
<div class="t" style="left:850px;top:526px;width:154px;text-align:center;font-size:10.5px">Forward Reverse</div>
<div class="a" style="left:235px;top:543px;width:307px;height:23px;background:#fff"></div>
<div class="a" style="left:542px;top:543px;width:462px;height:23px;background:#c0c0c0"></div>
<div class="t" style="left:235px;top:549px;width:153px;text-align:center;font-size:10.5px">SRR6848943</div>
<div class="t" style="left:388px;top:549px;width:154px;text-align:center;font-size:10.5px">R1(B) R2(B)</div>
<div class="t" style="left:542px;top:549px;width:154px;text-align:center;font-size:10.5px">R1, R2</div>
<div class="t" style="left:696px;top:549px;width:154px;text-align:center;font-size:10.5px">1 - 1000</div>
<div class="t" style="left:850px;top:549px;width:154px;text-align:center;font-size:10.5px">Forward Reverse</div>
<div class="a" style="left:235px;top:566px;width:307px;height:23px;background:#fff"></div>
<div class="a" style="left:542px;top:566px;width:462px;height:23px;background:#c0c0c0"></div>
<div class="t" style="left:235px;top:572px;width:153px;text-align:center;font-size:10.5px">SRR6848899</div>
<div class="t" style="left:388px;top:572px;width:154px;text-align:center;font-size:10.5px">R1(B) R2(B)</div>
<div class="t" style="left:542px;top:572px;width:154px;text-align:center;font-size:10.5px">R1, R2</div>
<div class="t" style="left:696px;top:572px;width:154px;text-align:center;font-size:10.5px">1 - 1000</div>
<div class="t" style="left:850px;top:572px;width:154px;text-align:center;font-size:10.5px">Forward Reverse</div>
<div class="a" style="left:235px;top:589px;width:307px;height:23px;background:#fff"></div>
<div class="a" style="left:542px;top:589px;width:462px;height:23px;background:#c0c0c0"></div>
<div class="t" style="left:235px;top:595px;width:153px;text-align:center;font-size:10.5px">SRR6848944</div>
<div class="t" style="left:388px;top:595px;width:154px;text-align:center;font-size:10.5px">R1(B) R2(B)</div>
<div class="t" style="left:542px;top:595px;width:154px;text-align:center;font-size:10.5px">R1, R2</div>
<div class="t" style="left:696px;top:595px;width:154px;text-align:center;font-size:10.5px">1 - 1000</div>
<div class="t" style="left:850px;top:595px;width:154px;text-align:center;font-size:10.5px">Forward Reverse</div>
<div class="a" style="left:235px;top:612px;width:307px;height:23px;background:#fff"></div>
<div class="a" style="left:542px;top:612px;width:462px;height:23px;background:#c0c0c0"></div>
<div class="t" style="left:235px;top:618px;width:153px;text-align:center;font-size:10.5px">SRR6849142</div>
<div class="t" style="left:388px;top:618px;width:154px;text-align:center;font-size:10.5px">R1(B) R2(B)</div>
<div class="t" style="left:542px;top:618px;width:154px;text-align:center;font-size:10.5px">R1, R2</div>
<div class="t" style="left:696px;top:618px;width:154px;text-align:center;font-size:10.5px">1 - 1000</div>
<div class="t" style="left:850px;top:618px;width:154px;text-align:center;font-size:10.5px">Forward Reverse</div>
<div class="a" style="left:235px;top:520px;width:769px;height:1px;background:#7a7a7a"></div>
<div class="a" style="left:235px;top:543px;width:769px;height:1px;background:#7a7a7a"></div>
<div class="a" style="left:235px;top:566px;width:769px;height:1px;background:#7a7a7a"></div>
<div class="a" style="left:235px;top:589px;width:769px;height:1px;background:#7a7a7a"></div>
<div class="a" style="left:235px;top:612px;width:769px;height:1px;background:#7a7a7a"></div>
<div class="a" style="left:235px;top:635px;width:769px;height:1px;background:#7a7a7a"></div>
<div class="a" style="left:388px;top:497px;width:1px;height:138px;background:#7a7a7a"></div>
<div class="a" style="left:542px;top:497px;width:1px;height:138px;background:#7a7a7a"></div>
<div class="a" style="left:696px;top:497px;width:1px;height:138px;background:#7a7a7a"></div>
<div class="a" style="left:850px;top:497px;width:1px;height:138px;background:#7a7a7a"></div>
<div class="btn" style="left:559px;top:647px;width:121px;height:21px;background:#cccccc;border-color:#bfbfbf"></div>
<div class="t" style="left:559px;top:651px;width:121px;text-align:center;color:#838383">Edit Selected Rows</div>
<div class="btn" style="left:83px;top:677px;width:71px;height:24px;"></div>
<div class="t" style="left:83px;top:681px;width:71px;text-align:center;color:#000;font-size:11px">Help</div>
<div class="btn" style="left:161px;top:677px;width:71px;height:24px;"></div>
<div class="t" style="left:161px;top:681px;width:71px;text-align:center;color:#000;font-size:11px">Reset</div>
<div class="btn" style="left:687px;top:677px;width:71px;height:24px;"></div>
<div class="t" style="left:687px;top:681px;width:71px;text-align:center;color:#000;font-size:11px">Previous</div>
<div class="btn" style="left:765px;top:677px;width:71px;height:24px;border:2px solid #0078d7"></div>
<div class="t" style="left:765px;top:681px;width:71px;text-align:center;color:#000;font-size:11px">Next</div>
<div class="a" style="left:768px;top:680px;width:65px;height:20px;border:1px dotted #000"></div>
<div class="btn" style="left:843px;top:677px;width:71px;height:24px;background:#cccccc;border-color:#bfbfbf"></div>
<div class="t" style="left:843px;top:681px;width:71px;text-align:center;color:#838383;font-size:11px">Finish</div>
<div class="btn" style="left:921px;top:677px;width:71px;height:24px;"></div>
<div class="t" style="left:921px;top:681px;width:71px;text-align:center;color:#000;font-size:11px">Cancel</div>
<div class="a" style="left:0;top:579px;width:59px;height:118px;background:#000"></div>
<div class="a" style="left:1007px;top:579px;width:168px;height:118px;background:#000"></div>
</body></html>
